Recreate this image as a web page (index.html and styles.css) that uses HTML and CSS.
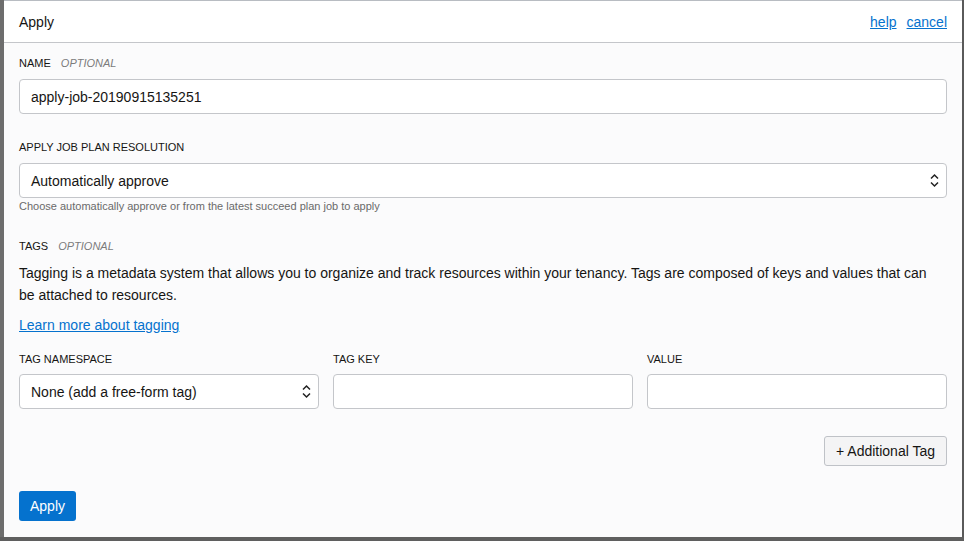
FILE: index.html
```html
<!DOCTYPE html>
<html lang="en">
<head>
<meta charset="utf-8">
<title>Apply</title>
<link rel="stylesheet" href="styles.css">
</head>
<body>
<div class="backdrop">
  <div class="edge"></div>
  <div class="panel">
    <header class="panel-header">
      <h1 class="panel-title">Apply</h1>
      <nav class="header-links">
        <a href="#" class="link">help</a>
        <a href="#" class="link">cancel</a>
      </nav>
    </header>
    <main class="panel-body">
      <div class="field">
        <div class="label">Name <span class="optional">Optional</span></div>
        <div class="input"><span class="value">apply-job-20190915135251</span></div>
      </div>

      <div class="field field-gap">
        <div class="label">Apply job plan resolution</div>
        <div class="input select">
          <span class="value">Automatically approve</span>
          <svg class="chevrons" width="9" height="15" viewBox="0 0 9 15"><path d="M1 5.5 L4.5 2 L8 5.5 M1 9.5 L4.5 13 L8 9.5" fill="none" stroke="#222" stroke-width="1.5"/></svg>
        </div>
        <div class="helper">Choose automatically approve or from the latest succeed plan job to apply</div>
      </div>

      <div class="field tags-gap">
        <div class="label">Tags <span class="optional">Optional</span></div>
        <p class="desc">Tagging is a metadata system that allows you to organize and track resources within your tenancy. Tags are composed of keys and values that can be attached to resources.</p>
        <a href="#" class="link learn">Learn more about tagging</a>
      </div>

      <div class="tag-grid">
        <div class="tag-col">
          <div class="label tag-label">Tag namespace</div>
          <div class="input select">
            <span class="value">None (add a free-form tag)</span>
            <svg class="chevrons" width="9" height="15" viewBox="0 0 9 15"><path d="M1 5.5 L4.5 2 L8 5.5 M1 9.5 L4.5 13 L8 9.5" fill="none" stroke="#222" stroke-width="1.5"/></svg>
          </div>
        </div>
        <div class="tag-col">
          <div class="label tag-label">Tag key</div>
          <div class="input"></div>
        </div>
        <div class="tag-col">
          <div class="label tag-label">Value</div>
          <div class="input"></div>
        </div>
      </div>

      <div class="add-row">
        <button class="btn-secondary">+ Additional Tag</button>
      </div>

      <div class="actions">
        <button class="btn-primary">Apply</button>
      </div>
    </main>
  </div>
  <div class="edge-right"></div>
</div>
</body>
</html>
```

FILE: styles.css
```css
* { box-sizing: border-box; }
html, body {
  margin: 0;
  padding: 0;
  width: 964px;
  height: 541px;
  overflow: hidden;
  background: #5f5f5f;
  font-family: "Liberation Sans", Arial, sans-serif;
}
.backdrop {
  display: flex;
  height: 541px;
  padding-bottom: 4px;
}
.edge {
  width: 4px;
  background: #6d6d6d;
  flex: none;
}
.edge-right {
  width: 2px;
  background: #5a5a5a;
  flex: none;
}
.panel {
  width: 958px;
  flex: none;
  background: #fbfbfc;
  border-top: 1px solid #b8bcc2;
  display: flex;
  flex-direction: column;
}
.panel-header {
  height: 42px;
  background: #ffffff;
  border-bottom: 1px solid #c4c6ca;
  display: flex;
  align-items: center;
  justify-content: space-between;
  padding: 0 15px;
}
.panel-title {
  margin: 0;
  font-size: 14px;
  font-weight: normal;
  color: #161513;
}
.header-links {
  display: flex;
  gap: 10px;
}
.link {
  color: #0572ce;
  text-decoration: underline;
  font-size: 14px;
}
.panel-body {
  padding: 13px 15px 0;
}
.field { display: flex; flex-direction: column; }
.label {
  font-size: 11px;
  line-height: 14px;
  text-transform: uppercase;
  color: #161513;
  margin-bottom: 9px;
}
.tag-label { margin-bottom: 8px; }
.optional {
  font-style: italic;
  color: #7c7c7c;
  margin-left: 7px;
}
.input {
  height: 35px;
  background: #ffffff;
  border: 1px solid #c4c6ca;
  border-radius: 4px;
  display: flex;
  align-items: center;
  padding: 0 7px 0 11px;
}
.value {
  font-size: 14px;
  color: #161513;
  flex: 1;
}
.chevrons { flex: none; }
.helper {
  font-size: 11px;
  line-height: 14px;
  color: #6a6a6a;
  margin-top: 1px;
}
.field-gap { margin-top: 26px; }
.tags-gap { margin-top: 26px; }
.desc {
  margin: 0;
  max-width: 924px;
  font-size: 14px;
  line-height: 22px;
  color: #161513;
}
.learn {
  margin-top: 8px;
  line-height: 22px;
  align-self: flex-start;
}
.tag-grid {
  margin-top: 16px;
  display: grid;
  grid-template-columns: repeat(3, 300px);
  gap: 14px;
}
.tag-col { display: flex; flex-direction: column; }
.add-row {
  margin-top: 27px;
  display: flex;
  justify-content: flex-end;
}
.btn-secondary {
  height: 30px;
  width: 123px;
  background: #f4f4f5;
  border: 1px solid #bfc2c7;
  border-radius: 3px;
  font-family: inherit;
  font-size: 14px;
  color: #161513;
  padding: 0;
}
.actions { margin-top: 25px; }
.btn-primary {
  height: 30px;
  width: 57px;
  background: #0572ce;
  border: none;
  border-radius: 3px;
  color: #ffffff;
  font-family: inherit;
  font-size: 14px;
  padding: 0;
}
```
